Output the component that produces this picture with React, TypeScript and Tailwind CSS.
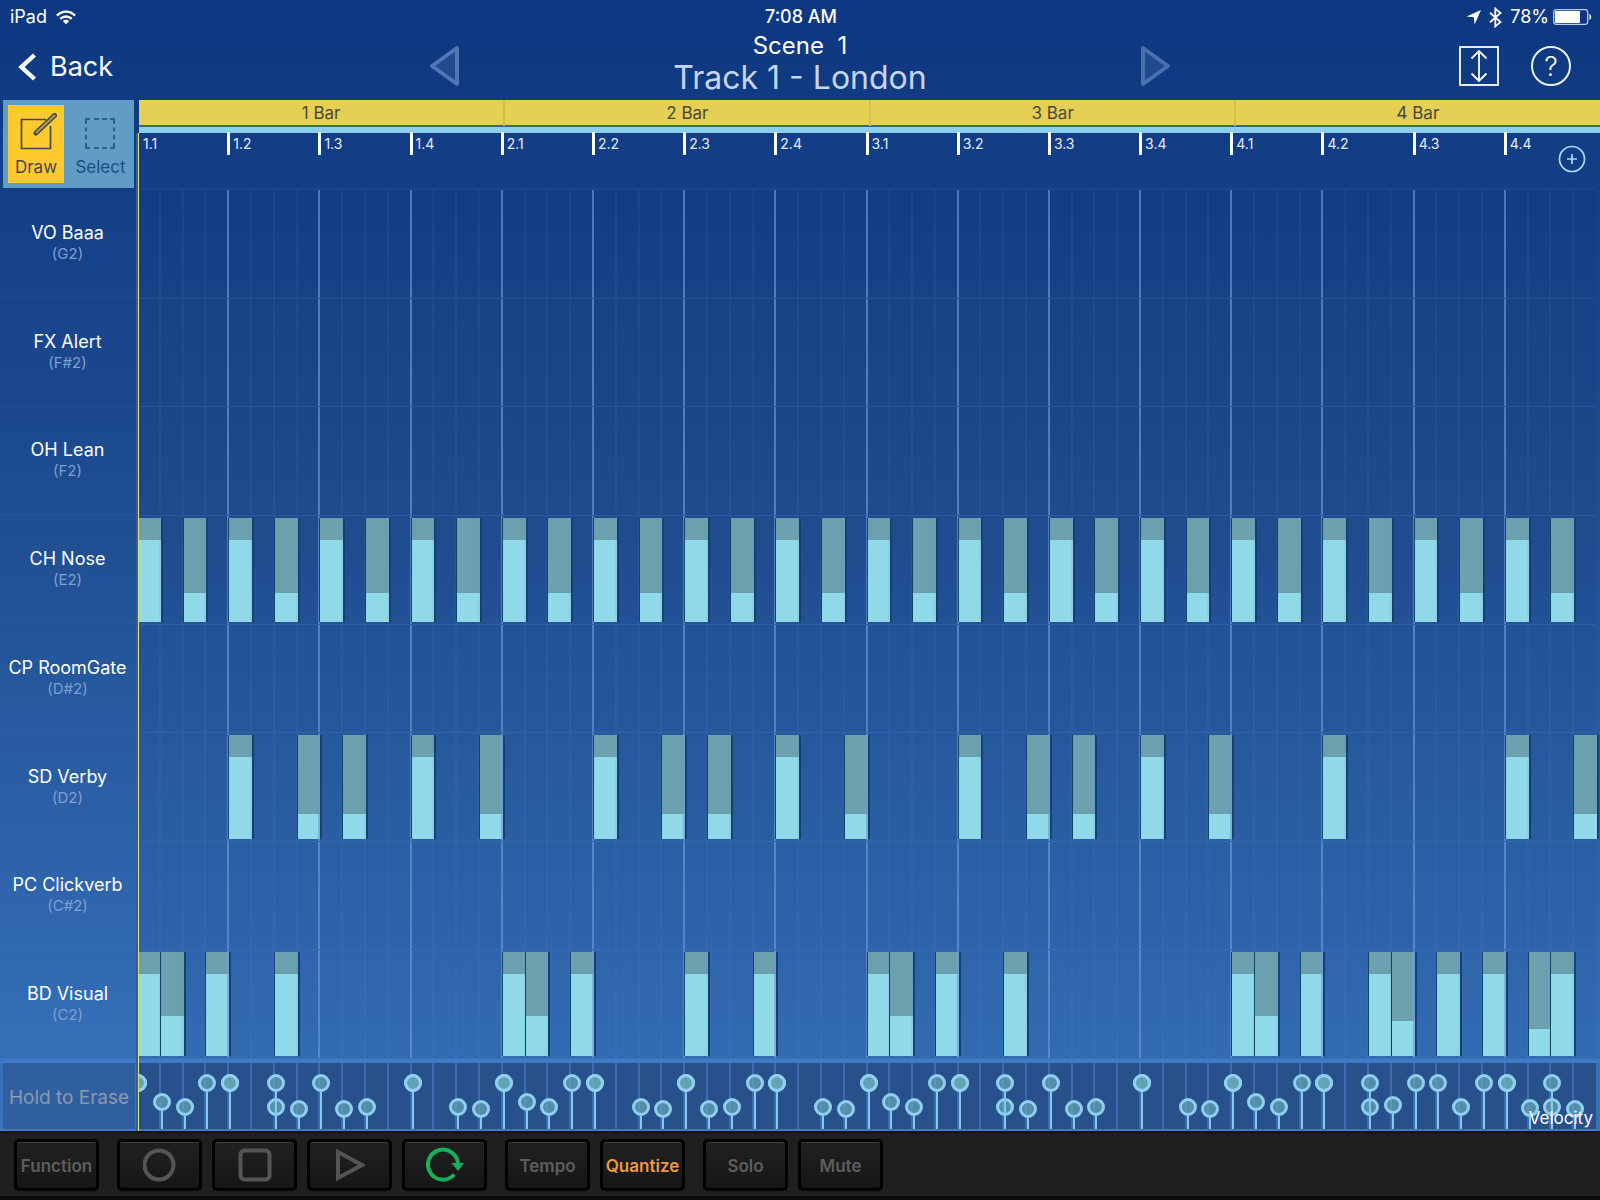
import React from "react";

type Note = { col: number; velocity: number };
type Track = { name: string; pitch: string; notes: Note[] };

const STEPS = Array.from({ length: 64 }, (_, i) => i);
const BEATS = ["1.1", "1.2", "1.3", "1.4", "2.1", "2.2", "2.3", "2.4", "3.1", "3.2", "3.3", "3.4", "4.1", "4.2", "4.3", "4.4"];

const at = (velocity: number, cols: number[]): Note[] => cols.map((col) => ({ col, velocity }));

const TRACKS: Track[] = [
  { name: "VO Baaa", pitch: "G2", notes: [] },
  { name: "FX Alert", pitch: "F#2", notes: [] },
  { name: "OH Lean", pitch: "F2", notes: [] },
  {
    name: "CH Nose",
    pitch: "E2",
    notes: [...at(79, STEPS.filter((s) => s % 4 === 0)), ...at(28, STEPS.filter((s) => s % 4 === 2))],
  },
  { name: "CP RoomGate", pitch: "D#2", notes: [] },
  {
    name: "SD Verby",
    pitch: "D2",
    notes: [...at(79, [4, 12, 20, 28, 36, 44, 52, 60]), ...at(24, [7, 9, 15, 23, 25, 31, 39, 41, 47, 63])],
  },
  { name: "PC Clickverb", pitch: "C#2", notes: [] },
  {
    name: "BD Visual",
    pitch: "C2",
    notes: [
      ...at(79, [0, 3, 6, 16, 19, 24, 27, 32, 35, 38, 48, 51, 54, 57, 59, 62]),
      ...at(39, [1, 17, 33, 49]),
      ...at(34, [55]),
      ...at(26, [61]),
    ],
  },
];

const ALL_NOTES = TRACKS.flatMap((t) => t.notes);

function StatusBar() {
  return (
    <div className="grid h-8 grid-cols-3 items-center pt-px pr-2 pl-[10px] text-[18px] leading-8">
      <div className="flex items-center gap-[9px]">
        <span>iPad</span>
        <svg width="20" height="15" viewBox="0 0 20 15" fill="none" stroke="currentColor" strokeWidth="2.4" aria-label="Wi-Fi">
          <path d="M1 5.600C6 .3 14 .3 19 5.600" />
          <path d="M4.300 8.900c3.200-3.200 8.200-3.200 11.400 0" />
          <path d="M10 14.200 6.800 11c1.800-1.600 4.600-1.600 6.400 0z" fill="currentColor" stroke="none" />
        </svg>
      </div>
      <div className="text-center font-medium">7:08 AM</div>
      <div className="flex items-center justify-end">
        <svg className="mr-2" width="15" height="15" viewBox="0 0 15 15" fill="currentColor" aria-label="Location">
          <path d="M15 0 8.600 14.500 7.800 7.200.5 6.500z" />
        </svg>
        <svg className="mr-2" width="13" height="21" viewBox="0 0 13 21" fill="none" stroke="currentColor" strokeWidth="1.800" aria-label="Bluetooth">
          <path d="M1 5.800 11.500 15 6.300 19.400V1.600L11.500 6 1 15.200" />
        </svg>
        <span className="mr-1">78%</span>
        <svg width="39" height="16" viewBox="0 0 39 16" aria-label="Battery">
          <rect x=".7" y=".7" width="34" height="14.600" rx="2.500" fill="none" stroke="#b9cbea" strokeWidth="1.300" />
          <rect x="2" y="2" width="25" height="12" rx="1" fill="#fff" />
          <path d="M36.300 5c2.600.6 2.600 5.400 0 6z" fill="#dfe8f7" />
        </svg>
      </div>
    </div>
  );
}

function NavBar() {
  return (
    <div className="grid h-[68px] grid-cols-[1fr_742px_1fr] items-center">
      <button className="flex items-center gap-[13px] pt-px pl-[18px] text-[27px] leading-8">
        <svg width="19" height="28" viewBox="0 0 19 28" fill="none" stroke="currentColor" strokeWidth="4.400">
          <path d="M16.500 2 3.500 14l13 12" />
        </svg>
        Back
      </button>
      <div className="flex items-center justify-between">
        <button aria-label="Previous track">
          <svg width="31" height="42" viewBox="0 0 31 42" fill="#204a8e" stroke="#5176b3" strokeWidth="4" strokeLinejoin="round">
            <path d="M28 3v36L3 21z" />
          </svg>
        </button>
        <div className="pb-1 text-center">
          <div className="text-[24px] leading-7 whitespace-pre">Scene  1</div>
          <h1 className="text-[32px] leading-9 font-normal text-[#c6d5f2]">Track 1 - London</h1>
        </div>
        <button aria-label="Next track">
          <svg width="31" height="42" viewBox="0 0 31 42" fill="#204a8e" stroke="#4a70ae" strokeWidth="4" strokeLinejoin="round">
            <path d="M3 3v36l25-18z" />
          </svg>
        </button>
      </div>
      <div className="flex items-center justify-end gap-8 pr-[29px]">
        <button aria-label="Zoom vertically">
          <svg width="40" height="40" viewBox="0 0 40 40" fill="none" stroke="#fff" strokeWidth="1.800">
            <rect x="1" y="1" width="38" height="38" />
            <path d="M20 5v30M12.500 12.500 20 5l7.500 7.500M12.500 27.500 20 35l7.500-7.500" />
          </svg>
        </button>
        <button aria-label="Help" className="flex size-10 items-center justify-center rounded-full border-2 border-[#e8f0fc] text-[27px] leading-none font-light">
          ?
        </button>
      </div>
    </div>
  );
}

function Tools() {
  return (
    <div className="mr-[3px] ml-[3px] flex h-[88px] bg-[#609cc5] p-[5px] text-[17px] leading-5">
      <button className="flex w-14 flex-col items-center justify-between bg-[#ffca2e] pt-2 pb-[6px] text-[#42464e]">
        <svg width="38" height="38" viewBox="0 0 38 38" fill="none" stroke="#42464e" strokeWidth="1.700" strokeLinecap="round" className="ml-1">
          <path d="M27 6.500H2.500v29H31.500V13" strokeLinecap="butt" />
          <path d="M17 20 35.500 2.500" strokeWidth="5" />
          <path d="M17.500 19.500 35.500 2.500" stroke="#b8a052" strokeWidth="1.800" />
        </svg>
        Draw
      </button>
      <button className="flex flex-1 flex-col items-center justify-between pt-[13px] pb-[6px] pl-2 text-[#1d4c86]">
        <svg width="30" height="31" viewBox="0 0 30 31" fill="none" stroke="#1d4c80" strokeWidth="1.600" className="mr-[2px]">
          <path d="M5 1H1v5M9 1h5M17 1h5M25 1h4v5M1 9.500v4M1 17v4.500M29 9.500v4M29 17v4.500M1 25v5h4M9 30h5M17 30h5M25 30h4v-5" />
        </svg>
        Select
      </button>
    </div>
  );
}

function Ruler() {
  return (
    <div>
      <div className="ml-[2px] grid h-[25px] grid-cols-4 bg-[#e5cf55]">
        {[1, 2, 3, 4].map((n) => (
          <div key={n} className="-ml-px border-l-2 border-[#d3bf54] text-center text-[17px] leading-[26px] text-[#4a4a3c] first:border-l-0">
            {n} Bar
          </div>
        ))}
      </div>
      <div className="ml-[2px] h-2 border-t-2 border-[#3d6478] bg-[#8bd0ea]" />
      <div className="relative -mt-px mr-1 grid h-[58px] grid-cols-[repeat(16,minmax(0,1fr))] border-b-2 border-[#1b4687] text-[14px]">
        {BEATS.map((b, i) => (
          <div key={b} className="flex gap-[3px]">
            <div className={i === 0 ? "w-[3px]" : "-ml-px h-[23px] w-[3px] bg-white"} />
            <span className="pt-1 leading-4 text-[#e2ecff]">{b}</span>
          </div>
        ))}
        <button aria-label="Add" className="absolute top-[13px] right-[10px]">
          <svg width="28" height="28" viewBox="0 0 28 28" fill="none" stroke="#a5dcf8" strokeWidth="1.700">
            <circle cx="14" cy="14" r="12.500" />
            <path d="M14 9v10M9 14h10" />
          </svg>
        </button>
      </div>
    </div>
  );
}

function TrackRow({ track }: { track: Track }) {
  return (
    <div className="grid min-h-[60px] grid-cols-[repeat(64,minmax(0,1fr))] border-b border-[#4a80c8]/25">
      {STEPS.map((s) => {
        const note = track.notes.find((n) => n.col === s);
        return (
          <div key={s} className={s === 0 ? "py-[2px]" : s % 4 === 0 ? "-ml-px border-l-2 border-[#6c9ad8]/65 py-[2px]" : "-ml-px border-l-2 border-[#5a90d8]/10 py-[2px]"}>
            {note && (
              <div className="-ml-px flex h-full w-[calc(100%+4px)] flex-col justify-end border-x border-r-2 border-[#17406e] bg-[#6ba1ae]">
                <div className="bg-[#8fd9e9]" style={{ height: `${note.velocity}%` }} />
              </div>
            )}
          </div>
        );
      })}
    </div>
  );
}

function VelocityLane() {
  return (
    <div className="relative mr-1 h-[66px] overflow-hidden bg-[#28508a]">
      <div className="grid h-full grid-cols-[repeat(64,minmax(0,1fr))]">
        {STEPS.map((s) => (
          <div key={s} className={s === 0 ? "grid h-full" : "-ml-px grid h-full border-l-2 border-[#3c6cb2]"}>
            {ALL_NOTES.filter((n) => n.col === s).map((n, i) => (
              <div key={i} className="-ml-2 flex w-[18px] flex-col items-center self-end [grid-area:1/1]" style={{ height: `${26 + 0.724 * n.velocity}%` }}>
                <div className="size-[18px] shrink-0 rounded-full border-[3px] border-[#8fd0f0] bg-[#6aaebb]/65" />
                <div className="w-[2px] flex-1 bg-[#85c8f0]" />
              </div>
            ))}
          </div>
        ))}
      </div>
      <span className="absolute right-[3px] bottom-px text-[17px] leading-5 text-white">Velocity</span>
    </div>
  );
}

function PadButton({ label, children, active }: { label: string; children?: React.ReactNode; active?: boolean }) {
  return (
    <button
      aria-label={label}
      className={
        "flex h-[52px] w-[85px] items-center justify-center rounded-[5px] border-[3px] border-black bg-linear-to-b from-[#212121] to-[#161616] text-[17px] font-semibold shadow-[inset_0_1px_0_#3a3a3a] " +
        (active ? "text-[#f0993a]" : "text-[#5e5e5e]")
      }
    >
      {children ?? <span className="pt-[3px]">{label}</span>}
    </button>
  );
}

function Transport() {
  return (
    <footer className="flex h-[69px] items-start gap-[18px] border-t-2 border-b-4 border-t-[#101318] border-b-[#0a0a0a] bg-[#1f1f1f] pt-[6px] pl-[14px]">
      <PadButton label="Function" />
      <div className="flex gap-[10px]">
        <PadButton label="Record">
          <svg width="34" height="34" viewBox="0 0 34 34" fill="none" stroke="#555" strokeWidth="4">
            <circle cx="16" cy="17" r="14.500" />
          </svg>
        </PadButton>
        <PadButton label="Stop">
          <svg width="34" height="34" viewBox="0 0 34 34" fill="none" stroke="#555" strokeWidth="4">
            <rect x="2.500" y="2.500" width="29" height="29" rx="4" />
          </svg>
        </PadButton>
        <PadButton label="Play">
          <svg width="30" height="34" viewBox="0 0 30 34" fill="none" stroke="#555" strokeWidth="4">
            <path d="M3 4v26l24-13z" />
          </svg>
        </PadButton>
        <PadButton label="Loop">
          <svg width="38" height="36" viewBox="0 0 38 36" fill="none" stroke="#16b15a" strokeWidth="4">
            <path d="M28.300 27.500A15 15 0 1 1 32 17.500" />
            <path d="M25.500 16h12.500l-5.800 8z" fill="#16b15a" stroke="none" />
          </svg>
        </PadButton>
      </div>
      <div className="flex gap-[10px]">
        <PadButton label="Tempo" />
        <PadButton label="Quantize" active />
      </div>
      <div className="flex gap-[10px]">
        <PadButton label="Solo" />
        <PadButton label="Mute" />
      </div>
    </footer>
  );
}

export default function App() {
  return (
    <div className="flex min-h-screen flex-col bg-[#1f1f1f] font-['Inter','Liberation_Sans',sans-serif] text-white">
      <div className="flex flex-1 flex-col bg-linear-to-b from-[#0d3780] via-[#1f4d91] via-45% to-[#3874be]">
        <header>
          <StatusBar />
          <NavBar />
        </header>
        <main className="flex flex-1">
          <aside className="flex w-[137px] shrink-0 flex-col">
            <Tools />
            <div className="mt-px grid flex-1 auto-rows-fr">
              {TRACKS.map((t) => (
                <div key={t.name} className="mr-[2px] flex min-h-[60px] flex-col items-center justify-center border-b border-[#4a80c8]/15 text-[18px] leading-[22px] whitespace-nowrap">
                  <span>{t.name}</span>
                  <span className="text-[15px] leading-5 text-[#7f9fd0]">({t.pitch})</span>
                </div>
              ))}
            </div>
            <div className="border-t-4 border-b-2 border-[#3f7ac8] pr-[2px] pl-[3px]">
              <button className="h-[66px] w-full bg-[#305f9f] pt-1 text-center text-[19px] whitespace-nowrap text-[#8c98ac]">Hold to Erase</button>
            </div>
          </aside>
          <section className="relative flex min-w-0 flex-1 flex-col">
            <Ruler />
            <div className="mr-1 grid flex-1 auto-rows-fr bg-[#0a2a50]/5">
              {TRACKS.map((t) => (
                <TrackRow key={t.name} track={t} />
              ))}
            </div>
            <div className="border-t-4 border-b-2 border-[#3f7ac8]">
              <VelocityLane />
            </div>
            <div className="absolute top-[33px] bottom-0 -left-px w-[3px] border-r border-[#e6e45c] bg-[#2a5fae]" />
          </section>
        </main>
      </div>
      <Transport />
    </div>
  );
}
